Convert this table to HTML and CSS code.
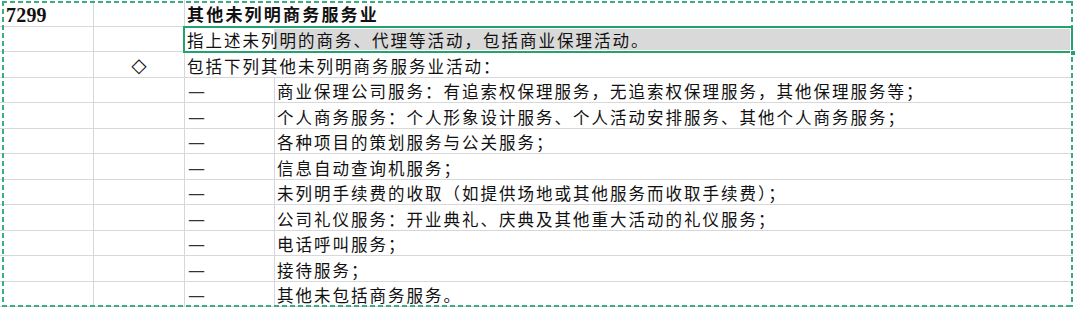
FILE: index.html
```html
<!DOCTYPE html>
<html lang="zh-CN">
<head>
<meta charset="utf-8">
<title>7299 其他未列明商务服务业</title>
<link rel="stylesheet" href="styles.css">
</head>
<body>
<div class="sheet">
  <div class="grid">
    <div class="cell col-a code">7299</div>
    <div class="cell col-b"></div>
    <div class="cell col-cd title">其他未列明商务服务业</div>

    <div class="cell col-a"></div>
    <div class="cell col-b"></div>
    <div class="cell col-cd selected">指上述未列明的商务、代理等活动，包括商业保理活动。</div>

    <div class="cell col-a"></div>
    <div class="cell col-b mark">◇</div>
    <div class="cell col-cd">包括下列其他未列明商务服务业活动：</div>

    <div class="cell col-a"></div><div class="cell col-b"></div>
    <div class="cell col-c dash">—</div><div class="cell col-d">商业保理公司服务：有追索权保理服务，无追索权保理服务，其他保理服务等；</div>

    <div class="cell col-a"></div><div class="cell col-b"></div>
    <div class="cell col-c dash">—</div><div class="cell col-d">个人商务服务：个人形象设计服务、个人活动安排服务、其他个人商务服务；</div>

    <div class="cell col-a"></div><div class="cell col-b"></div>
    <div class="cell col-c dash">—</div><div class="cell col-d">各种项目的策划服务与公关服务；</div>

    <div class="cell col-a"></div><div class="cell col-b"></div>
    <div class="cell col-c dash">—</div><div class="cell col-d">信息自动查询机服务；</div>

    <div class="cell col-a"></div><div class="cell col-b"></div>
    <div class="cell col-c dash">—</div><div class="cell col-d">未列明手续费的收取（如提供场地或其他服务而收取手续费）；</div>

    <div class="cell col-a"></div><div class="cell col-b"></div>
    <div class="cell col-c dash">—</div><div class="cell col-d">公司礼仪服务：开业典礼、庆典及其他重大活动的礼仪服务；</div>

    <div class="cell col-a"></div><div class="cell col-b"></div>
    <div class="cell col-c dash">—</div><div class="cell col-d">电话呼叫服务；</div>

    <div class="cell col-a"></div><div class="cell col-b"></div>
    <div class="cell col-c dash">—</div><div class="cell col-d">接待服务；</div>

    <div class="cell col-a"></div><div class="cell col-b"></div>
    <div class="cell col-c dash">—</div><div class="cell col-d">其他未包括商务服务。</div>
  </div>
  <div class="marquee"></div>
  <div class="selbox"><span class="handle"></span></div>
</div>
</body>
</html>
```

FILE: styles.css
```css
* { box-sizing: border-box; }

html, body {
  margin: 0;
  padding: 0;
  background: #ffffff;
}

body {
  width: 1080px;
  height: 309px;
  overflow: hidden;
  font-family: "Noto Sans CJK SC", "Noto Sans", sans-serif;
  color: #111111;
}

.sheet {
  position: relative;
  width: 1080px;
  height: 309px;
}

.grid {
  display: grid;
  width: 1073px;
  height: 307px;
  grid-template-columns: 94px 91px 90px 798px;
  grid-template-rows: 27px repeat(11, 1fr);
}

.cell {
  display: flex;
  align-items: flex-end;
  min-width: 0;
  padding: 0 0 1px 2px;
  border-bottom: 1px solid #d8d8d8;
  border-right: 1px solid #d6d6e2;
  font-size: 16.5px;
  line-height: 20px;
  letter-spacing: 2px;
  white-space: nowrap;
  overflow: visible;
}

.col-a { padding-left: 6px; }

.col-cd {
  grid-column: 3 / 5;
  border-right: none;
}

.col-d { border-right: none; }

.dash {
  font-family: "DejaVu Sans", sans-serif;
  letter-spacing: 0;
  padding-left: 3px;
  font-size: 17px;
  color: #333333;
}

.code {
  font-family: "Liberation Serif", serif;
  font-weight: bold;
  font-size: 20px;
  letter-spacing: 0.2px;
  padding-bottom: 1px;
}

.title {
  font-weight: bold;
  font-size: 17px;
  letter-spacing: 2.2px;
  padding-bottom: 2px;
}

.selected {
  background: linear-gradient(to right, transparent 89px, #d9d9d9 89px);
}

.mark {
  justify-content: center;
  padding-left: 0;
  padding-bottom: 2px;
  letter-spacing: 0;
  font-family: "DejaVu Sans", sans-serif;
  font-size: 20px;
  color: #111111;
}

/* copy marquee: dashed green outline over the whole range */
.marquee {
  position: absolute;
  left: 2px;
  top: 1px;
  width: 1071px;
  height: 306px;
  pointer-events: none;
  background:
    repeating-linear-gradient(90deg, #3aae80 0 5px, transparent 5px 8px) left top / 100% 2px no-repeat,
    repeating-linear-gradient(90deg, #3aae80 0 5px, transparent 5px 8px) left bottom / 100% 2px no-repeat,
    repeating-linear-gradient(180deg, #3aae80 0 5px, transparent 5px 8px) left top / 2px 100% no-repeat,
    repeating-linear-gradient(180deg, #3aae80 0 5px, transparent 5px 8px) right top / 2px 100% no-repeat;
}

/* active selection frame */
.selbox {
  position: absolute;
  left: 183px;
  top: 26px;
  width: 890px;
  height: 27px;
  border: 2px solid #22a26d;
  box-shadow: inset 0 0 0 1px #ffffff;
  pointer-events: none;
}

.handle {
  position: absolute;
  right: -5px;
  bottom: -5px;
  width: 6px;
  height: 6px;
  background: #22a26d;
  border: 1px solid #ffffff;
}
```
